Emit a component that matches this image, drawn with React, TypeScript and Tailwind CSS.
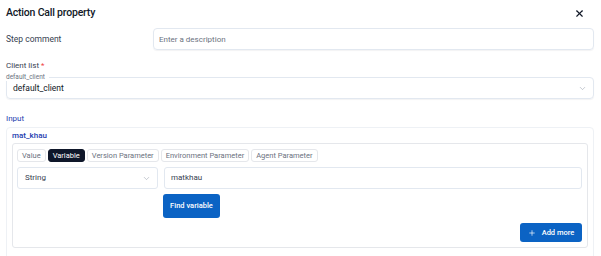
import { X, ChevronDown, Plus } from 'lucide-react';

const tabs = ['Value', 'Variable', 'Version Parameter', 'Environment Parameter', 'Agent Parameter'];

export default function App() {
  const active = 'Variable';

  return (
    <div className="w-[601px] h-[256px] overflow-hidden bg-white text-[#1f2937] font-['Roboto',sans-serif]">
      {/* Header */}
      <div className="flex items-center justify-between h-[24px] pl-[6px] pr-[16px] pt-[2px]">
        <h2 className="text-[10.5px] font-medium text-[#111827] tracking-[-0.2px]">Action Call property</h2>
        <X className="w-[11px] h-[11px] text-[#111827]" strokeWidth={2.5} />
      </div>

      {/* Step comment */}
      <div className="flex items-center mt-[4px] pl-[6px] pr-[7px]">
        <span className="w-[147px] text-[8.5px] text-[#374151]">Step comment</span>
        <input
          placeholder="Enter a description"
          className="flex-1 h-[22px] px-[5px] text-[8px] border border-[#e2e8f0] rounded-[4px] shadow-[0_1px_1px_rgba(15,23,42,0.05)] placeholder:text-[#6b7280] outline-none"
        />
      </div>

      {/* Client list */}
      <div className="mt-[10px] pl-[6px] pr-[7px]">
        <div className="text-[8px] text-[#374151] leading-[12px]">
          Client list <span className="text-[#ef4444]">*</span>
        </div>
        <div className="relative mt-[5px] h-[22px] border border-[#e2e8f0] rounded-[4px] pl-[6px] pr-[6px] flex items-center justify-between shadow-[0_1px_1px_rgba(15,23,42,0.05)]">
          <span className="absolute -left-[1px] -top-[5px] bg-white pr-[4px] text-[6.5px] leading-[8px] text-[#6b7280]">
            default_client
          </span>
          <span className="text-[8.5px] text-[#111827]">default_client</span>
          <ChevronDown className="w-[9px] h-[9px] text-[#9ca3af]" strokeWidth={1.5} />
        </div>
      </div>

      {/* Input section */}
      <div className="mt-[15px] pl-[6px] pr-[7px]">
        <div className="text-[8px] text-[#1e40af] leading-[10px]">Input</div>
        <div className="mt-[3px] border border-[#eef1f5] rounded-[4px] px-[5px] pt-[2px] h-[140px]">
          <div className="text-[8px] font-medium text-[#1e40af] leading-[12px]">mat_khau</div>
          <div className="mt-[1px] border border-[#e5e7eb] rounded-[3px] pl-[4px] pr-[5px] pt-[5px] h-[105px] flex flex-col">
            <div className="flex gap-[2px]">
              {tabs.map((t) => (
                <span
                  key={t}
                  className={`h-[13px] px-[4px] flex items-center text-[7.5px] rounded-[3px] border ${
                    t === active ? 'bg-[#0f172a] border-[#0f172a] text-white' : 'border-[#e5e7eb] text-[#6b7280]'
                  }`}
                >
                  {t}
                </span>
              ))}
            </div>
            <div className="flex gap-[6px] mt-[5px]">
              <div className="w-[141px] h-[22px] border border-[#e2e8f0] rounded-[3px] flex items-center justify-between pl-[7px] pr-[6px]">
                <span className="text-[8px] text-[#374151]">String</span>
                <ChevronDown className="w-[9px] h-[9px] text-[#9ca3af]" strokeWidth={1.5} />
              </div>
              <div className="flex-1 h-[22px] border border-[#e2e8f0] rounded-[3px] flex items-center px-[6px]">
                <span className="text-[8px] text-[#374151]">matkhau</span>
              </div>
            </div>
            <div className="flex pl-[146px] mt-[5px]">
              <button className="w-[57px] h-[24px] bg-[#0b63c4] text-white text-[7.5px] font-medium rounded-[3px]">
                Find variable
              </button>
            </div>
            <div className="flex justify-end mt-[5px]">
              <button className="w-[62px] h-[19px] bg-[#0b63c4] text-white text-[7.5px] font-medium rounded-[3px] flex items-center justify-center gap-[6px]">
                <Plus className="w-[8px] h-[8px]" strokeWidth={2} />
                Add more
              </button>
            </div>
          </div>
        </div>
      </div>
    </div>
  );
}
